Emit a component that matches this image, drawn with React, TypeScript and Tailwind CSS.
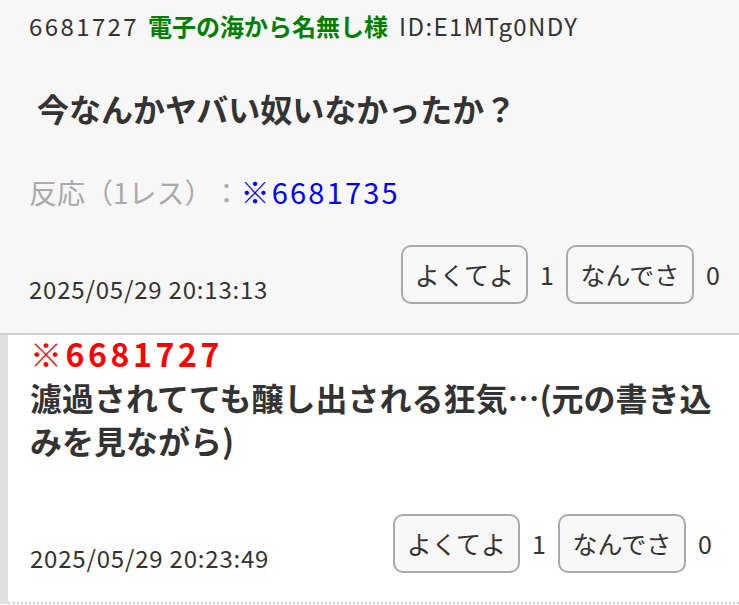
import React from "react";

function Reactions({ good, bad }: { good: number; bad: number }) {
  return (
    <div className="flex items-center">
      <button className="w-[127px] h-[59px] border-2 border-[#aaaaaa] rounded-[10px] bg-[#f8f8f8] text-[25px] text-[#333] flex items-center justify-center">
        よくてよ
      </button>
      <span className="w-[38px] text-center text-[25px] text-[#333]">{good}</span>
      <button className="w-[128px] h-[59px] border-2 border-[#aaaaaa] rounded-[10px] bg-[#f8f8f8] text-[25px] text-[#333] flex items-center justify-center">
        なんでさ
      </button>
      <span className="w-[26px] text-right text-[25px] text-[#333]">{bad}</span>
    </div>
  );
}

export default function App() {
  return (
    <div className="w-[739px] h-[605px] overflow-hidden bg-white text-[#333] font-['Noto_Sans_CJK_JP','Noto_Sans',sans-serif] [text-spacing-trim:space-all]">
      <div className="bg-[#f7f7f7] border-b-2 border-[#d0d0d0] pl-[29px] pr-[19px] pt-[8px] pb-[29px]">
        <div className="text-[24px] leading-[36px] flex items-center">
          <span className="text-[#333] tracking-[2.4px]">6681727</span>
          <span className="ml-[9px] text-[#008000] font-bold">電子の海から名無し様</span>
          <span className="ml-[11px] text-[#333] tracking-[1.4px]">ID:E1MTg0NDY</span>
        </div>
        <div className="mt-[40px] ml-[8px] text-[32px] leading-[48px] font-bold text-[#333]">
          今なんかヤバい奴いなかったか？
        </div>
        <div className="mt-[38px] text-[28px] leading-[42px]">
          <span className="text-[#aaaaaa]">反応（1レス）：</span>
          <span className="text-[#0000ff] text-[29px] tracking-[2.2px]">※6681735</span>
        </div>
        <div className="mt-[32px] flex items-end justify-between">
          <span className="text-[24px] leading-[30px] text-[#333] tracking-[0.8px]">2025/05/29 20:13:13</span>
          <Reactions good={1} bad={0} />
        </div>
      </div>
      <div className="flex">
        <div className="w-[8px] shrink-0 bg-[#e0e0e0]" />
        <div className="flex-1 border-b-2 border-dotted border-[#cccccc] pl-[22px] pr-[27px] pb-[29px]">
          <div className="text-[32px] leading-[36px] font-bold text-[#ff0000] tracking-[3.6px]">※6681727</div>
          <div className="mt-[5px] text-[32px] leading-[43px] font-bold text-[#333]">
            濾過されてても醸し出される狂気…(元の書き込みを見ながら)
          </div>
          <div className="mt-[52px] flex items-end justify-between">
            <span className="text-[24px] leading-[30px] text-[#333] tracking-[0.8px]">2025/05/29 20:23:49</span>
            <Reactions good={1} bad={0} />
          </div>
        </div>
      </div>
    </div>
  );
}
